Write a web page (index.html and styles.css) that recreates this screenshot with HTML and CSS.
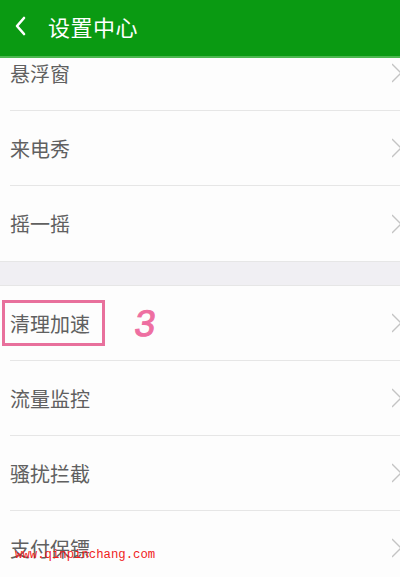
FILE: index.html
```html
<!DOCTYPE html>
<html lang="zh-CN">

<head>
    <meta charset="UTF-8">
    <meta name="viewport" content="width=device-width, initial-scale=1.0">
    <title>设置中心</title>
    <link rel="stylesheet" href="styles.css">
</head>

<body>
    <div class="screen">
        <div class="header">
            <svg class="back" width="14" height="22" viewBox="0 0 14 22">
                <path d="M11 3 L4 11 L11 19" fill="none" stroke="#fff" stroke-width="2.6" stroke-linecap="round" stroke-linejoin="round"/>
            </svg>
            <span class="title">设置中心</span>
        </div>

        <div class="viewport">
            <div class="list">
                <div class="row"><span class="label">悬浮窗</span><svg class="arrow" width="8" height="20" viewBox="0 0 8 20"><path d="M0 1 L9 10 L0 19" fill="none" stroke="#c4c4c4" stroke-width="1.4"/></svg></div>
                <div class="row"><span class="label">来电秀</span><svg class="arrow" width="8" height="20" viewBox="0 0 8 20"><path d="M0 1 L9 10 L0 19" fill="none" stroke="#c4c4c4" stroke-width="1.4"/></svg></div>
                <div class="row last"><span class="label">摇一摇</span><svg class="arrow" width="8" height="20" viewBox="0 0 8 20"><path d="M0 1 L9 10 L0 19" fill="none" stroke="#c4c4c4" stroke-width="1.4"/></svg></div>

                <div class="gap"></div>

                <div class="row">
                    <span class="label marked">清理加速</span>
                    <span class="step">3</span>
                    <svg class="arrow" width="8" height="20" viewBox="0 0 8 20"><path d="M0 1 L9 10 L0 19" fill="none" stroke="#c4c4c4" stroke-width="1.4"/></svg>
                </div>
                <div class="row"><span class="label">流量监控</span><svg class="arrow" width="8" height="20" viewBox="0 0 8 20"><path d="M0 1 L9 10 L0 19" fill="none" stroke="#c4c4c4" stroke-width="1.4"/></svg></div>
                <div class="row"><span class="label">骚扰拦截</span><svg class="arrow" width="8" height="20" viewBox="0 0 8 20"><path d="M0 1 L9 10 L0 19" fill="none" stroke="#c4c4c4" stroke-width="1.4"/></svg></div>
                <div class="row"><span class="label">支付保镖</span><svg class="arrow" width="8" height="20" viewBox="0 0 8 20"><path d="M0 1 L9 10 L0 19" fill="none" stroke="#c4c4c4" stroke-width="1.4"/></svg></div>
            </div>
        </div>

        <div class="watermark">www.qinpinchang.com</div>
    </div>
</body>

</html>
```

FILE: styles.css
```css
body {
    margin: 0;
    padding: 0;
    background: #fdfdfd;
    font-family: "Noto Sans CJK SC", "Noto Sans", sans-serif;
    color: #5a5a5a;
}

.screen {
    position: relative;
    width: 400px;
    height: 577px;
    overflow: hidden;
    background: #fdfdfd;
}

.header {
    height: 58px;
    display: flex;
    align-items: center;
    padding: 0 0 4px 13px;
    box-sizing: border-box;
    background: #0a9a12;
    border-bottom: 2px solid #4cb84f;
}

.back {
    display: block;
}

.title {
    margin-left: 21px;
    font-size: 22px;
    color: #fff;
    letter-spacing: 0.5px;
}

.viewport {
    height: 519px;
    overflow: hidden;
}

.list {
    margin-top: -22px;
}

.row {
    height: 74px;
    display: flex;
    align-items: center;
    margin-left: 10px;
    border-bottom: 1px solid #e6e6e6;
}

.row.last {
    border-bottom: none;
    height: 75px;
}

.label {
    flex: 1;
    font-size: 20px;
    color: #606060;
}

.label.marked {
    flex: none;
    height: 40px;
    display: flex;
    align-items: center;
    margin-left: -8px;
    padding: 0 12px 0 5px;
    border: 3px solid #e8709c;
}

.step {
    flex: 1;
    margin-left: 30px;
    font-family: "Liberation Sans", sans-serif;
    font-size: 37px;
    line-height: 1;
    color: #ee6fa1;
    -webkit-text-stroke: 1px #ee6fa1;
    transform: skewX(-8deg);
}

.arrow {
    display: block;
    flex: none;
}

.gap {
    height: 23px;
    background: #f0eff3;
    border-top: 1px solid #e6e6e6;
    border-bottom: 1px solid #e6e6e6;
}

.watermark {
    position: absolute;
    left: 15px;
    top: 548px;
    font-family: "Liberation Mono", monospace;
    font-size: 12.3px;
    color: #f01c1c;
}
```
